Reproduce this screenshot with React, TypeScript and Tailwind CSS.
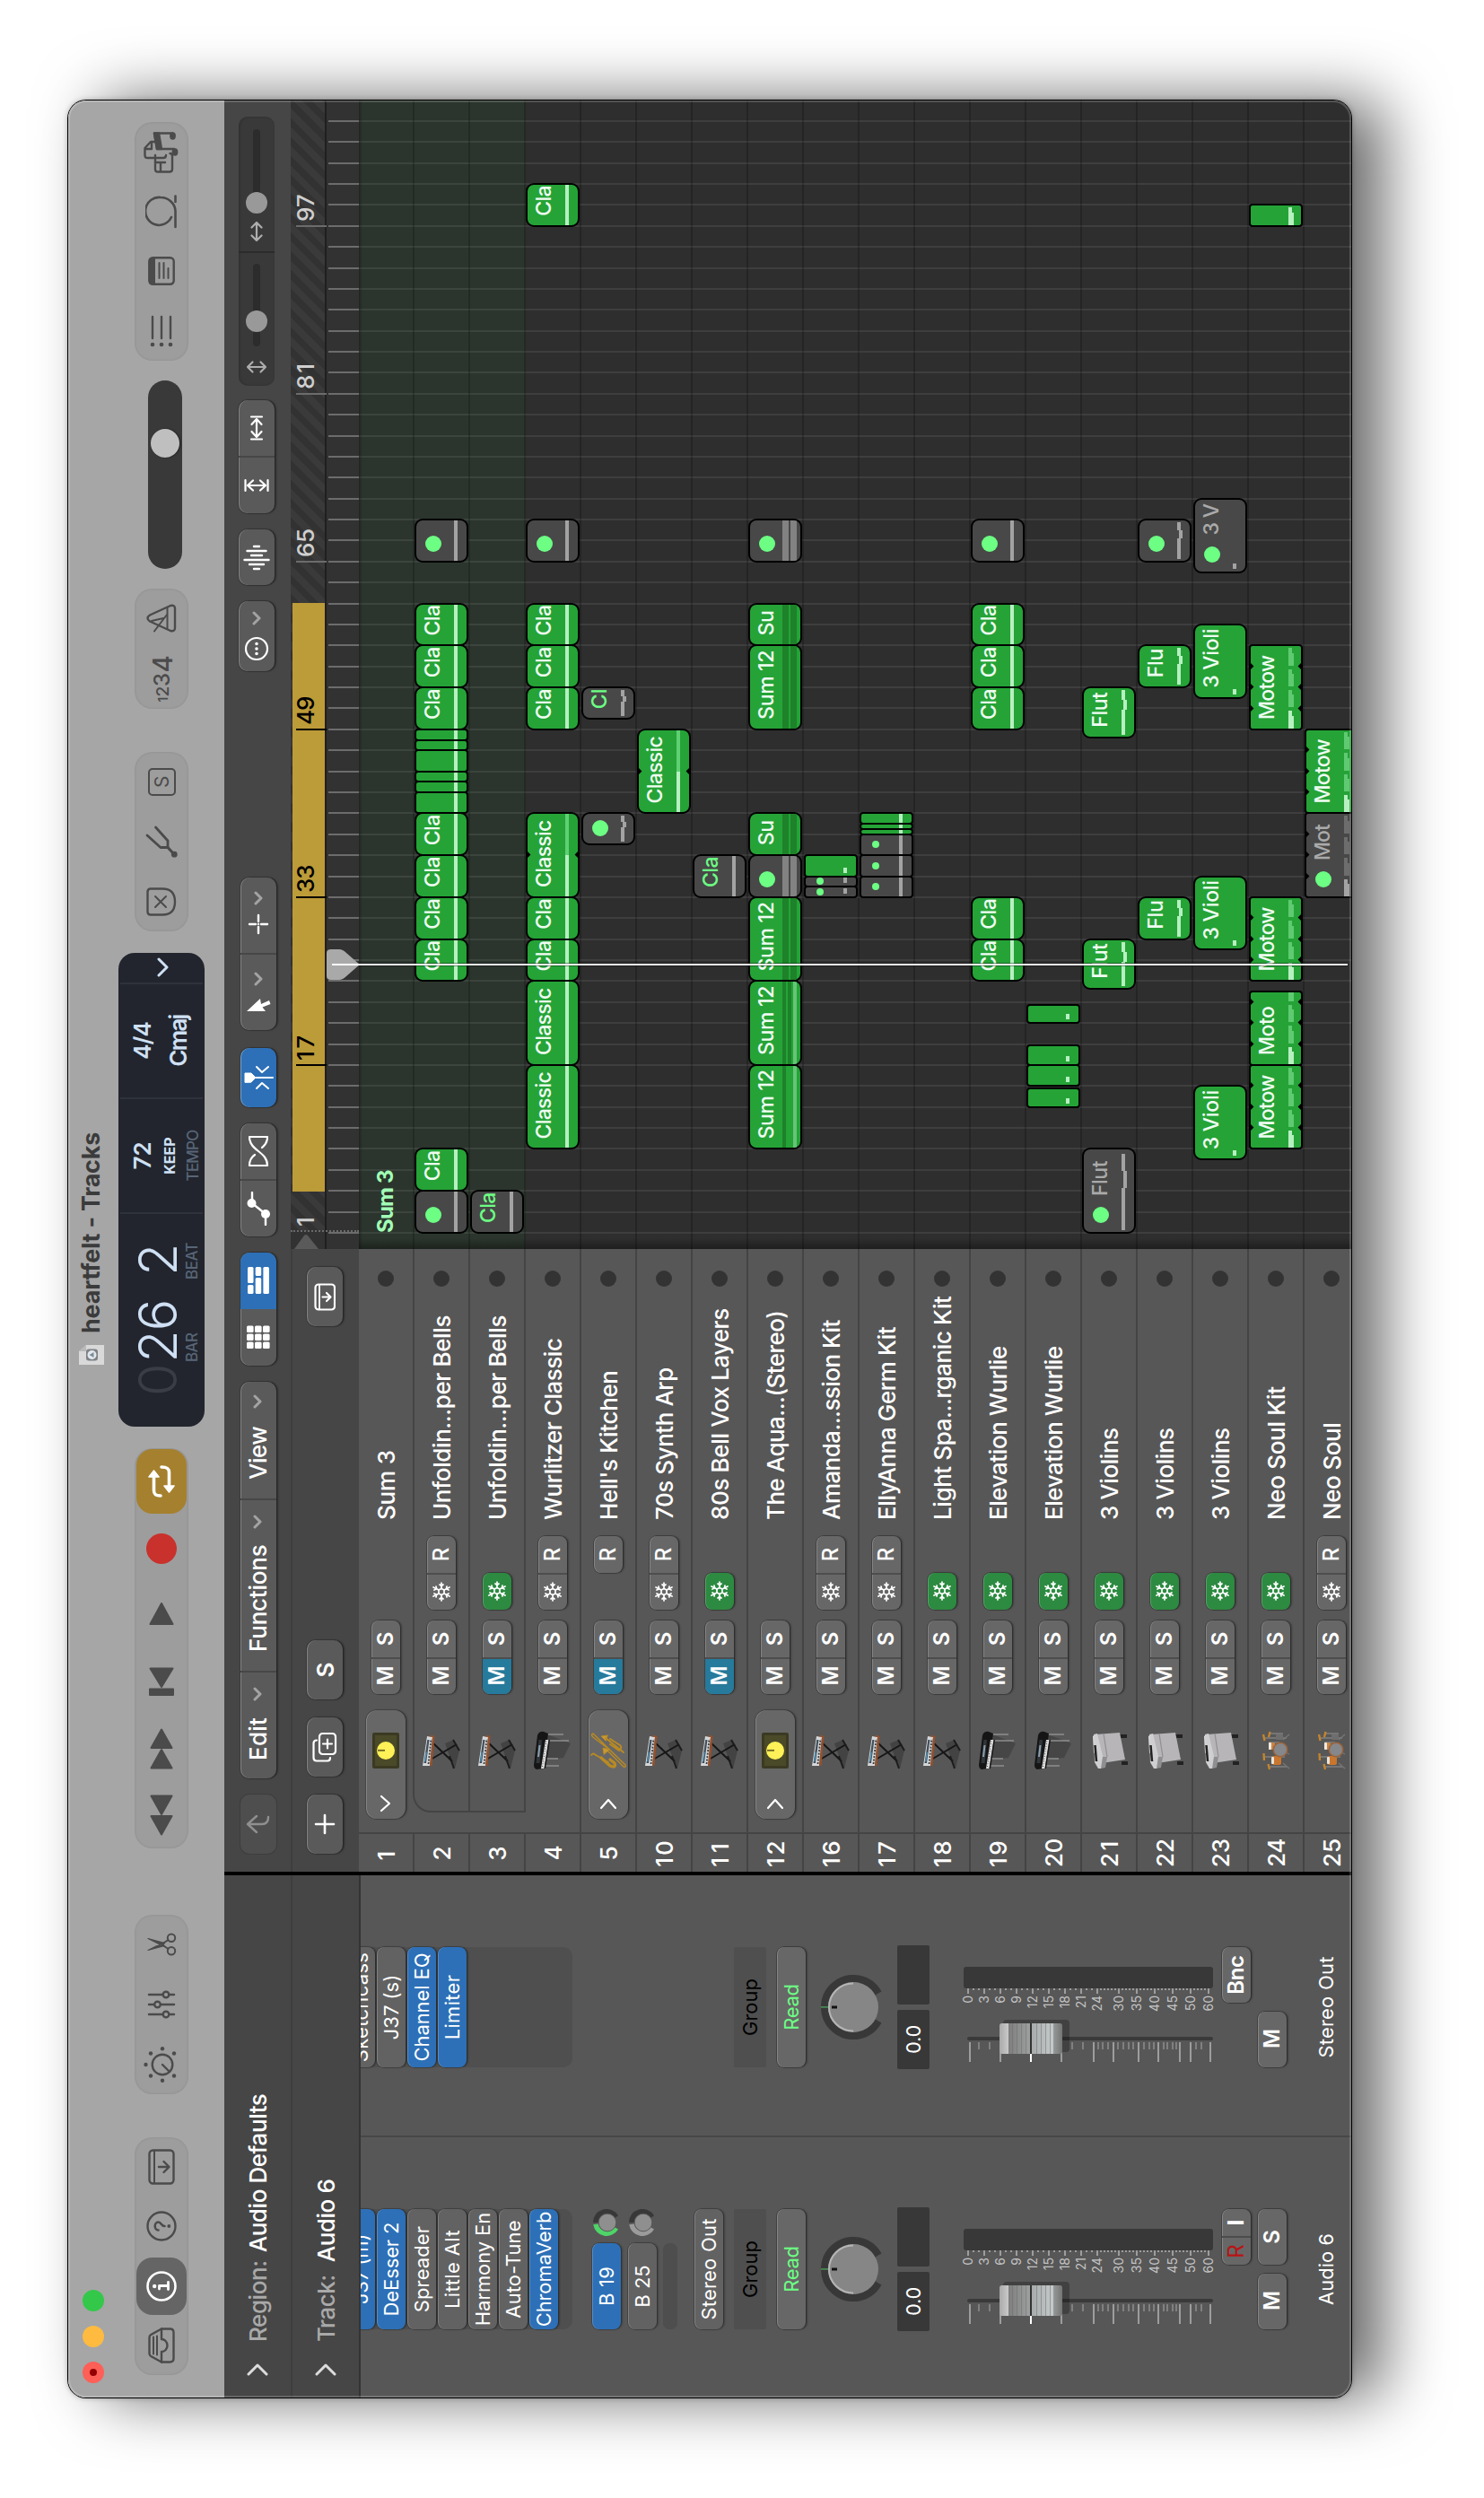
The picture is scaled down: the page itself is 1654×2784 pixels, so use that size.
import React, { useLayoutEffect, useRef, useState } from "react";
import { Snowflake } from "lucide-react";

/* ---------- helpers ---------- */

/** Text whose tracking is computed so that it fills the given width. */
function Fit({ w, className = "", children }: { w: number; className?: string; children: string }) {
  const ref = useRef<HTMLSpanElement>(null);
  const [spacing, setSpacing] = useState(0);
  useLayoutEffect(() => {
    const el = ref.current;
    if (!el) return;
    setSpacing((w - el.offsetWidth) / Math.max(1, children.length));
  }, [w, children]);
  return (
    <span ref={ref} style={{ letterSpacing: spacing }} className={"inline-block whitespace-pre " + className}>
      {children}
    </span>
  );
}

const raised =
  "bg-[#5a5a5a] rounded-[10px] shadow-[inset_0_1px_0_rgba(255,255,255,0.25),0_0_0_1px_rgba(0,0,0,0.18),0_2px_2px_rgba(0,0,0,0.35)]";
const blue =
  "bg-[#2d70b7] rounded-[10px] shadow-[inset_0_1px_0_rgba(255,255,255,0.35),0_0_0_1px_rgba(0,0,0,0.18),0_2px_2px_rgba(0,0,0,0.35)]";
const raisedSm =
  "bg-[#676767] rounded-[8px] shadow-[inset_0_1px_0_rgba(255,255,255,0.2),0_0_0_1px_rgba(0,0,0,0.25),0_2px_2px_rgba(0,0,0,0.3)]";

/* ---------- toolbar icons ---------- */

const Ico = ({ w, h, sw = 2.4, children }: { w: number; h: number; sw?: number; children: React.ReactNode }) => (
  <svg width={w} height={h} viewBox={`0 0 ${w} ${h}`} fill="none" stroke="currentColor" strokeWidth={sw} strokeLinecap="round" strokeLinejoin="round">
    {children}
  </svg>
);

const TrayIcon = () => (
  <Ico w={40} h={30}>
    <path d="M1.5 15 8 3.2Q9 1.5 11 1.5H29Q31 1.5 32 3.2L38.500 15V24.500Q38.500 28.500 34.500 28.500H5.500Q1.500 28.500 1.500 24.500Z" />
    <path d="M1.5 15H13a7 6.500 0 0 0 14 0H38.500" />
    <path d="M10.500 6H29.500M9.500 10H30.500" strokeWidth={2} />
  </Ico>
);
const InfoIcon = () => (
  <Ico w={34} h={34} sw={2.600}>
    <circle cx={17} cy={17} r={15.500} />
    <path d="M14 14.500H17.500V24M13.500 24.500H21.500" strokeWidth={2.800} />
    <circle cx={17} cy={9.200} r={2.200} fill="currentColor" stroke="none" />
  </Ico>
);
const HelpIcon = () => (
  <Ico w={34} h={34}>
    <circle cx={17} cy={17} r={15.500} />
    <path d="M12.500 13.500C12.500 8.500 21.500 8.500 21.500 13.500C21.500 17 17 16.500 17 20.500" strokeWidth={2.600} />
    <circle cx={17} cy={25.300} r={1.900} fill="currentColor" stroke="none" />
  </Ico>
);
const BoxArrowIcon = () => (
  <Ico w={40} h={30}>
    <rect x={1.500} y={1.500} width={37} height={27} rx={4} />
    <path d="M2 7H38" strokeWidth={2} />
    <path d="M20 12V23M14 17.500L20 23.500L26 17.500" />
  </Ico>
);
const BoxArrowSmall = () => (
  <Ico w={32} h={24} sw={2.200}>
    <rect x={1.500} y={1.500} width={28} height={21.500} rx={3.500} />
    <path d="M2 6H29" strokeWidth={1.800} />
    <path d="M15.500 9.500V18M11 14L15.500 18.500L20 14" />
  </Ico>
);
const KnobIcon = () => (
  <Ico w={42} h={42}>
    <circle cx={21} cy={22} r={11.300} />
    <path d="M21 22L13 30" />
    <g fill="currentColor" stroke="none">
      <circle cx={21} cy={3.500} r={2.200} />
      <circle cx={8.500} cy={9} r={2.200} />
      <circle cx={33.500} cy={9} r={2.200} />
      <circle cx={3.200} cy={22} r={2.200} />
      <circle cx={38.800} cy={22} r={2.200} />
      <circle cx={8.500} cy={35} r={2.200} />
      <circle cx={33.500} cy={35} r={2.200} />
    </g>
  </Ico>
);
const MixerIcon = () => (
  <Ico w={32} h={32}>
    <path d="M5 2V18M5 25V30M16 2V8M16 15V30M27 2V18M27 25V30" />
    <circle cx={5} cy={21} r={3.300} />
    <circle cx={16} cy={11.500} r={3.300} />
    <circle cx={27} cy={21} r={3.300} />
  </Ico>
);
const ScissorsIcon = () => (
  <Ico w={26} h={34} sw={2}>
    <circle cx={5.800} cy={28} r={4.200} />
    <circle cx={20.200} cy={28} r={4.200} />
    <path d="M8 24.500L13 17L18 24.500" />
    <path d="M6.500 2L14.500 18L11.500 20.500Z M19.500 2L11.500 18L14.500 20.500Z" fill="currentColor" strokeWidth={1.200} />
  </Ico>
);
const Rewind = ({ flip = false }: { flip?: boolean }) => (
  <svg width={48} height={28} viewBox="0 0 48 28" className={flip ? "-scale-x-100" : ""} fill="currentColor" stroke="currentColor" strokeWidth={2} strokeLinejoin="round">
    <path d="M2.500 14L23 2.500V25.500ZM25 14L45.500 2.500V25.500Z" />
  </svg>
);
const ToStart = () => (
  <svg width={34} height={30} viewBox="0 0 34 30" fill="currentColor" stroke="currentColor" strokeWidth={2} strokeLinejoin="round">
    <path d="M2 2H8.500V28H2Z M11 15L31.500 2.500V27.500Z" />
  </svg>
);
const Play = () => (
  <svg width={28} height={30} viewBox="0 0 28 30" className="relative left-[2px]" fill="currentColor" stroke="currentColor" strokeWidth={2} strokeLinejoin="round">
    <path d="M2 2.500L25 15L2 27.500Z" />
  </svg>
);
const CycleIcon = () => (
  <svg width={38} height={34} viewBox="0 0 38 34" fill="none" stroke="currentColor" strokeWidth={3.600} strokeLinecap="round">
    <path d="M3 16C3 10 5 8.500 9 8.500H24" />
    <path d="M35 17C35 24 33 25.500 29 25.500H14" />
    <path d="M24 3L31 8.500L24 14Z" fill="currentColor" strokeWidth={1.600} strokeLinejoin="round" />
    <path d="M14 20L7 25.500L14 31Z" fill="currentColor" strokeWidth={1.600} strokeLinejoin="round" />
  </svg>
);
const ReplaceIcon = () => (
  <Ico w={32} h={34}>
    <path d="M1.500 5Q1.500 1.500 5 1.500H27Q30.500 1.500 30.500 5V18Q30.500 32 16 32Q1.500 32 1.500 18Z" />
    <path d="M10 10L22 22M22 10L10 22" strokeWidth={2} />
  </Ico>
);
const ForkIcon = () => (
  <Ico w={38} h={38} sw={2.800}>
    <path d="M26 3L12.500 18V26H20L35 12.500" />
    <path d="M12.500 26L5 33" strokeWidth={3.200} />
    <circle cx={4.800} cy={33.300} r={3.400} fill="currentColor" stroke="none" />
  </Ico>
);
const MetronomeIcon = () => (
  <Ico w={34} h={34}>
    <path d="M13.500 4Q17 -1 20.500 4L31 27Q32 32 28 32H6Q2 32 3 27Z" />
    <path d="M5 23.500H29M21 23L2.500 9M14 6L17 19" strokeWidth={2} />
  </Ico>
);
const ListIcon = () => (
  <Ico w={36} h={26}>
    <path d="M10 3H34M10 13H34M10 23H34" />
    <g fill="currentColor" stroke="none">
      <circle cx={3} cy={3} r={2.300} />
      <circle cx={3} cy={13} r={2.300} />
      <circle cx={3} cy={23} r={2.300} />
    </g>
  </Ico>
);
const NotepadIcon = () => (
  <Ico w={32} h={30}>
    <rect x={1.300} y={1.300} width={29.400} height={27.400} rx={4} />
    <path d="M2 2H30V7.500H2Z" fill="currentColor" strokeWidth={1} />
    <path d="M8 12.500H25M8 17.500H25M8 22.500H19" strokeWidth={2} />
  </Ico>
);
const LoopIcon = () => (
  <Ico w={38} h={36} sw={2.600}>
    <path d="M2 33.500H20C28 33 35 26 35 17A15.500 15.200 0 1 0 13 29" />
    <path d="M30 33.500H36.500" />
  </Ico>
);
const MediaIcon = () => (
  <Ico w={48} h={40}>
    <path d="M20 13H4.500Q1.500 13 1.500 16V29Q1.500 32 4.500 32H19Q22 32 22 29.500M2 19H12M12 13V24" />
    <path d="M20 25Q17 25 17 22V4.500Q17 1.500 20 1.500H28L35 8V12M27 2V9H34" />
    <path d="M27 34V15L44.500 12V32" strokeWidth={2.600} />
    <path d="M27 15L44.500 12V17L27 20Z" fill="currentColor" />
    <ellipse cx={23.500} cy={35} rx={4.200} ry={3.400} fill="currentColor" stroke="none" />
    <ellipse cx={41.500} cy={32.500} rx={4.200} ry={3.400} fill="currentColor" stroke="none" />
  </Ico>
);

/* ---------- title bar ---------- */

const Pill = ({ className, children }: { className: string; children: React.ReactNode }) => (
  <div className={"flex h-[60px] shrink-0 rounded-[20px] bg-[#9d9d9d] text-[#4b4b4b] shadow-[inset_0_0_3px_rgba(0,0,0,0.12)] *:flex *:h-full *:flex-1 *:items-center *:justify-center " + className}>
    {children}
  </div>
);

function Lcd() {
  return (
    <div className="ml-6 flex h-24 w-[528px] shrink-0 rounded-[18px] bg-[#22252e] py-[2px] text-[#cfe0f4]">
      <div className="flex w-[239px] border-r-2 border-[#2e323b] pl-[34px]">
        <div className="flex h-[84px] text-[59px] leading-[84px] font-light">
          <Fit w={37} className="text-[#3a3d45]">0</Fit>
          <Fit w={70}>26</Fit>
        </div>
        <div className="ml-[27px] h-[84px] text-[59px] leading-[84px] font-light">
          <Fit w={34}>2</Fit>
        </div>
      </div>
      <div className="flex w-[128px] flex-col items-center border-r-2 border-[#2e323b] pt-[12px]">
        <Fit w={31} className="text-[26px] leading-[26px] font-semibold">72</Fit>
        <Fit w={41} className="mt-[7px] text-[16px] leading-[20px] font-bold">KEEP</Fit>
        <Fit w={57} className="mt-[6px] text-[17px] leading-[20px] font-medium text-[#586577]">TEMPO</Fit>
      </div>
      <div className="flex w-[128px] flex-col items-center border-r-2 border-[#2e323b] pt-[12px] text-[26px] leading-[26px] font-semibold">
        <Fit w={41}>4/4</Fit>
        <Fit w={57} className="mt-[14px]">Cmaj</Fit>
      </div>
      <div className="flex w-[33px] items-center justify-center pt-1">
        <Ico w={22} h={14} sw={3}>
          <path d="M2 2L11 11L20 2" />
        </Ico>
      </div>
    </div>
  );
}

function TitleBar() {
  return (
    <div className="h-[174px] shrink-0 bg-[#a6a6a6]">
      <div className="relative flex h-14 items-center pl-4">
        <div className="flex gap-4">
          <span className="flex size-6 items-center justify-center rounded-full bg-[#fe5f57]">
            <span className="size-2 rounded-full bg-[#950003]" />
          </span>
          <span className="size-6 rounded-full bg-[#febb40]" />
          <span className="size-6 rounded-full bg-[#34c84a]" />
        </div>
        <div className="-mt-1 ml-[1030px] flex items-center">
          <svg width={24} height={30} viewBox="0 0 24 30">
            <path d="M1 1H16L23 9V29H1Z" fill="#d9d9d9" />
            <path d="M16 1V9H23Z" fill="#b9b9b9" />
            <rect x={5.500} y={9} width={13} height={13} rx={3} fill="#7d8288" />
            <circle cx={12} cy={15.500} r={5} fill="#e4e8ec" />
            <path d="M9 17.500L12 12.500L15 17.500Z" fill="#7a8c9c" />
          </svg>
          <Fit w={224} className="ml-[12px] text-[27px] font-bold text-[#3b3b3b]">heartfelt - Tracks</Fit>
        </div>
      </div>
      <div className="flex h-24 items-center pl-[25px]">
        <Pill className="w-[265px]">
          <span><TrayIcon /></span>
          <span>
            <span className="flex h-14 w-16 items-center justify-center rounded-[18px] bg-[#656565] text-white"><InfoIcon /></span>
          </span>
          <span><HelpIcon /></span>
          <span><BoxArrowIcon /></span>
        </Pill>
        <Pill className="ml-12 w-[200px]">
          <span><KnobIcon /></span>
          <span><MixerIcon /></span>
          <span><ScissorsIcon /></span>
        </Pill>
        <Pill className="ml-[74px] w-[446px]">
          <span><Rewind /></span>
          <span><Rewind flip /></span>
          <span><ToStart /></span>
          <span><Play /></span>
          <span><span className="size-[34px] rounded-full bg-[#c9312d]" /></span>
          <span>
            <span className="flex h-14 w-[72px] items-center justify-center rounded-[18px] bg-[#a5802e] text-white"><CycleIcon /></span>
          </span>
        </Pill>
        <div className="relative flex">
          <Lcd />
          <Fit w={32} className="absolute top-[70px] left-[96px] text-[17px] font-medium text-[#586577]">BAR</Fit>
          <Fit w={41} className="absolute top-[70px] left-[188px] text-[17px] font-medium text-[#586577]">BEAT</Fit>
        </div>
        <Pill className="ml-6 w-[200px]">
          <span><ReplaceIcon /></span>
          <span><ForkIcon /></span>
          <span>
            <span className="flex size-[31px] items-center justify-center rounded-[5px] border-[2.5px] border-[#4b4b4b] text-[21px] leading-none">S</span>
          </span>
        </Pill>
        <Pill className="ml-12 w-[134px]">
          <span className="pt-[2px] leading-none font-medium">
            <span className="text-[15px]">1</span>
            <span className="text-[19px]">2</span>
            <span className="text-[24px]">3</span>
            <span className="text-[30px]">4</span>
          </span>
          <span><MetronomeIcon /></span>
        </Pill>
        <div className="mt-2 ml-[22px] flex h-[38px] w-[210px] items-center rounded-full bg-[#393939] pl-[124px]">
          <span className="size-8 rounded-full bg-[#bfbfbf] shadow-[0_1px_2px_rgba(0,0,0,0.5)]" />
        </div>
        <Pill className="ml-[22px] w-[266px]">
          <span><ListIcon /></span>
          <span><NotepadIcon /></span>
          <span><LoopIcon /></span>
          <span><MediaIcon /></span>
        </Pill>
      </div>
    </div>
  );
}

/* ---------- inspector ---------- */

const TICK_LABELS: [string, number][] = [
  ["0", 5], ["3", 23], ["6", 41], ["9", 59], ["12", 77], ["15", 95], ["18", 113], ["21", 131],
  ["24", 149], ["30", 173], ["35", 193], ["40", 213], ["45", 233], ["50", 253], ["60", 273],
];
const LONG_TICKS = [7, 41, 109, 145, 167, 195, 217, 241, 253, 275];
const SHORT_TICKS = [17, 29, 121, 133, 150, 155, 161, 172, 178, 184, 189, 201, 207, 212, 223, 227, 233, 237, 259, 265];

function Fader() {
  const minor: number[] = [];
  for (let i = 0; i < 8; i++) for (const s of [6, 12]) minor.push(5 + i * 18 + s);
  for (let y = 153; y < 273; y += 4) minor.push(y);
  return (
    <svg width={134} height={278} viewBox="0 0 134 278" className="block overflow-visible">
      <defs>
        <linearGradient id="cap" x1="0" y1="0" x2="0" y2="1">
          <stop offset="0" stopColor="#a9a9a9" />
          <stop offset="0.14" stopColor="#c9c9c9" />
          <stop offset="0.145" stopColor="#7e7e7e" />
          <stop offset="0.5" stopColor="#9fa1a1" />
          <stop offset="0.52" stopColor="#a8acac" />
          <stop offset="0.85" stopColor="#c4c9ca" />
          <stop offset="0.855" stopColor="#979a9a" />
          <stop offset="1" stopColor="#747474" />
        </linearGradient>
      </defs>
      <rect x={88} y={0} width={24} height={278} rx={3} fill="#383838" />
      <g fill="#9d9d9d">
        {TICK_LABELS.map(([t, y]) => (
          <g key={t}>
            <rect x={82} y={y - 1} width={6} height={2} />
            <text x={80} y={y + 5} textAnchor="end" fontSize={14} fill="#c4c4c4">{t}</text>
          </g>
        ))}
        {minor.map((y) => <rect key={y} x={86} y={y - 1} width={2} height={2} />)}
        {LONG_TICKS.map((y) => <rect key={y} x={6} y={y - 1} width={22} height={2} />)}
        {SHORT_TICKS.map((y) => <rect key={y} x={20} y={y - 1} width={8} height={2} fill="#808080" />)}
      </g>
      <rect x={6} y={74} width={22} height={2} fill="#fff" />
      <rect x={30} y={4} width={4} height={274} rx={2} fill="#3a3a3a" />
      <rect x={17} y={44} width={36} height={74} rx={4} fill="#000" opacity={0.25} />
      <rect x={15} y={40} width={34} height={70} rx={2.500} fill="url(#cap)" />
      {[54, 59, 64, 69, 81, 86, 91, 96].map((y) => <rect key={y} x={15} y={y} width={34} height={0.800} fill="#6b6b6b" opacity={0.6} />)}
      <rect x={15} y={74} width={34} height={2} fill="#333" />
    </svg>
  );
}

const PanKnob = () => (
  <svg width={72} height={72} viewBox="0 0 72 72" className="mx-auto mt-[17px] block">
    <path d="M20.500 64A32 32 0 1 1 51.500 64" fill="none" stroke="#383838" strokeWidth={8} />
    <circle cx={36} cy={36} r={28} fill="#868686" />
    <path d="M9.500 36A26.500 27 0 0 1 62.500 36" fill="none" stroke="#b5b5b5" strokeWidth={2} />
    <rect x={35.500} y={0} width={1.200} height={8} fill="#4fae62" />
    <rect x={34.500} y={12} width={3} height={6} fill="#111" />
  </svg>
);

const SendKnob = ({ arc }: { arc: string }) => (
  <svg width={32} height={32} viewBox="0 0 32 32" className="ml-2">
    <path d="M16 3A13 13 0 0 1 22.500 27.300" fill="none" stroke="#383838" strokeWidth={6} />
    <path d="M14 3.200A13 13 0 0 0 9.500 27.300" fill="none" stroke={arc} strokeWidth={6} />
    <circle cx={16} cy={17} r={10.500} fill="#8f8f8f" stroke="#575757" strokeWidth={1} />
  </svg>
);

type Slot = { t: string; w: number; on?: boolean };

const SlotButton = ({ t, w, on, className = "" }: Slot & { className?: string }) => (
  <div
    className={
      "flex h-8 shrink-0 items-center justify-center rounded-[8px] text-[22px] text-white shadow-[inset_0_1px_0_rgba(255,255,255,0.2),0_0_0_1px_rgba(0,0,0,0.22),0_2px_2px_rgba(0,0,0,0.25)] " +
      (on ? "bg-[#2d70b7] " : "bg-[#626262] ") + className
    }
  >
    <Fit w={w}>{t}</Fit>
  </div>
);

function Strip({ name, nameWidth, slots, audio }: { name: string; nameWidth: number; slots: Slot[]; audio: boolean }) {
  return (
    <div className="flex h-full w-[290px] shrink-0 flex-col pr-[80px] pl-[76px]">
      <div className="-mt-4 flex h-[252px] shrink-0 flex-col gap-[2px] rounded-[10px] bg-[#4f4f4f]">
        {slots.map((s) => <SlotButton key={s.t} {...s} />)}
      </div>
      <div className="mt-[22px] h-[114px] shrink-0">
        {audio && (
          <div className="flex flex-col">
            <div className="flex h-8"><SlotButton t="B 19" w={44} on className="w-24" /><SendKnob arc="#4fd468" /></div>
            <div className="mt-2 flex h-8"><SlotButton t="B 25" w={47} className="w-24" /><SendKnob arc="#9b9b9b" /></div>
            <div className="mt-[7px] h-4 w-24 rounded-[7px] bg-[#4e4e4e]" />
          </div>
        )}
      </div>
      <div className="h-8 shrink-0">{audio && <SlotButton t="Stereo Out" w={113} />}</div>
      <div className="mt-3 flex h-9 shrink-0 items-center justify-center rounded-[2px] bg-[#4f4f4f] text-[22px] text-black"><Fit w={64}>Group</Fit></div>
      <div className={"mt-3 flex h-8 shrink-0 items-center justify-center text-[22px] text-[#6cff84] " + raisedSm}><Fit w={52}>Read</Fit></div>
      <PanKnob />
      <div className="-mx-[2px] mt-[13px] flex h-9 shrink-0 gap-[6px]">
        <div className="flex flex-1 items-center justify-center rounded-[2px] bg-[#383838] text-[22px] text-white"><Fit w={32}>0.0</Fit></div>
        <div className="flex-1 rounded-[2px] bg-[#383838]" />
      </div>
      <div className="mt-[38px] h-[278px] shrink-0"><Fader /></div>
      <div className="mt-[10px] flex h-8 shrink-0 justify-end text-[24px]">
        {audio ? (
          <div className={"flex w-[62px] " + raisedSm}>
            <span className="flex flex-1 items-center justify-center border-r-2 border-[#4c4c4c] text-[#b81414]">R</span>
            <span className="flex flex-1 items-center justify-center font-bold text-white">I</span>
          </div>
        ) : (
          <div className={"flex w-[62px] items-center justify-center font-semibold text-white " + raisedSm}><Fit w={43}>Bnc</Fit></div>
        )}
      </div>
      <div className="mt-2 flex h-8 shrink-0 justify-between text-[24px] font-semibold text-white">
        <div className={"flex w-[62px] items-center justify-center " + raisedSm}><Fit w={20}>M</Fit></div>
        {audio && <div className={"flex w-[62px] items-center justify-center " + raisedSm}><Fit w={16}>S</Fit></div>}
      </div>
      <div className="mt-[30px] flex h-7 items-center justify-center text-[22px] text-white"><Fit w={nameWidth}>{name}</Fit></div>
    </div>
  );
}

function Inspector() {
  return (
    <div className="flex w-[582px] shrink-0 flex-col bg-[#464646]">
      <div className="flex h-[76px] shrink-0 items-center border-b-2 border-[#3e3e3e] pl-[24px] text-[26px] font-medium">
        <Ico w={14} h={24} sw={3}><path d="M2 2L12 12L2 22" stroke="#dcdcdc" /></Ico>
        <Fit w={91} className="ml-[24px] text-[#a9a9a9]">Region:</Fit>
        <Fit w={177} className="ml-[9px] text-white">Audio Defaults</Fit>
      </div>
      <div className="flex h-[76px] shrink-0 items-center border-b-2 border-[#343434] pl-[24px] text-[26px] font-medium">
        <Ico w={14} h={24} sw={3}><path d="M2 2L12 12L2 22" stroke="#dcdcdc" /></Ico>
        <Fit w={75} className="ml-[24px] text-[#a9a9a9]">Track:</Fit>
        <Fit w={93} className="ml-[14px] text-white">Audio 6</Fit>
      </div>
      <div className="flex min-h-0 flex-1 overflow-hidden bg-[#575757]">
        <Strip
          name="Audio 6"
          nameWidth={80}
          audio
          slots={[
            { t: "J37 (m)", w: 78, on: true },
            { t: "DeEsser 2", w: 105, on: true },
            { t: "Spreader", w: 96 },
            { t: "Little Alt", w: 88 },
            { t: "Harmony En", w: 126 },
            { t: "Auto-Tune", w: 109 },
            { t: "ChromaVerb", w: 129, on: true },
          ]}
        />
        <div className="w-[2px] shrink-0 bg-[#474747]" />
        <Strip
          name="Stereo Out"
          nameWidth={113}
          audio={false}
          slots={[
            { t: "Sketchcass", w: 122 },
            { t: "J37 (s)", w: 72 },
            { t: "Channel EQ", w: 121, on: true },
            { t: "Limiter", w: 72, on: true },
          ]}
        />
      </div>
    </div>
  );
}

/* ---------- track toolbar ---------- */

const Chev = () => (
  <Ico w={16} h={10} sw={3}><path d="M2 2L8 8L14 2" stroke="#a3a3a3" /></Ico>
);
const cell = "flex h-full items-center justify-center";
const div = " border-r-2 border-[#474747]";

function Toolbar() {
  return (
    <div className="flex h-[76px] shrink-0 border-b-2 border-[#3e3e3e] pt-[18px] pl-5 text-[26px] font-medium text-white *:h-10 *:shrink-0">
      <div className="flex w-[66px] items-center justify-center rounded-[10px] bg-[#4e4e4e] text-[#8f8f8f] shadow-[0_0_0_1px_rgba(0,0,0,0.12)]">
        <Ico w={22} h={28}><path d="M2 12L11 2L20 12M11 2V18Q11 25 19 25" /></Ico>
      </div>
      <div className={"ml-[18px] flex *:pb-[2px] " + raised}>
        <div className={"flex h-full w-[120px] items-center justify-between pr-[16px] pl-[20px]" + div}><Fit w={48}>Edit</Fit><Chev /></div>
        <div className={"flex h-full w-[192px] items-center justify-between pr-[16px] pl-[21px]" + div}><Fit w={119}>Functions</Fit><Chev /></div>
        <div className="flex h-full w-[130px] items-center justify-between pr-[14px] pl-[21px]"><Fit w={59}>View</Fit><Chev /></div>
      </div>
      <div className={"ml-[18px] flex overflow-hidden " + raised}>
        <div className={cell + " w-[63px]"}>
          <svg width={26} height={26} viewBox="0 0 26 26" fill="#fff">
            {[0, 9, 18].map((y) => [0, 9, 18].map((x) => <rect key={`${x}-${y}`} x={x} y={y} width={7.600} height={7.600} rx={1.500} />))}
          </svg>
        </div>
        <div className={cell + " w-[63px] bg-[#2d70b7]"}>
          <svg width={30} height={24} viewBox="0 0 30 24" fill="#fff">
            <rect x={0} y={0} width={10} height={6.500} rx={1.500} />
            <rect x={12} y={0} width={18} height={6.500} rx={1.500} />
            <rect x={0} y={8.700} width={18} height={6.500} rx={1.500} />
            <rect x={20} y={8.700} width={10} height={6.500} rx={1.500} />
            <rect x={0} y={17.400} width={30} height={6.500} rx={1.500} />
          </svg>
        </div>
      </div>
      <div className={"ml-[18px] flex " + raised}>
        <div className={cell + " w-[64px]" + div}>
          <Ico w={38} h={28}>
            <path d="M1 22H13L25 7H37" />
            <circle cx={13} cy={22} r={5} fill="#fff" stroke="none" />
            <circle cx={25} cy={6.500} r={5} fill="#fff" stroke="none" />
          </Ico>
        </div>
        <div className={cell + " w-[62px]"}>
          <Ico w={36} h={24} sw={2.200}>
            <path d="M2 2V22C10 22 14 17 18 12C22 7 26 2 34 2V22C26 22 24 18 22 16M2 2C9 2 12 5 14 8" />
          </Ico>
        </div>
      </div>
      <div className={cell + " ml-[18px] w-[66px] " + blue}>
        <Ico w={28} h={34} sw={2}>
          <path d="M9 2H19V9L14 14L9 9Z" fill="#fff" strokeWidth={1} />
          <path d="M14 12V33M2 15L8 21L2 28M26 15L20 21L26 28" />
        </Ico>
      </div>
      <div className={"ml-[20px] flex " + raised}>
        <div className={cell + " w-[86px] gap-[12px]" + div}>
          <svg width={18} height={28} viewBox="0 0 18 28"><path d="M2 1L16 16L10 17L14 26L10 27.500L6.500 18.500L2 22Z" fill="#fff" /></svg>
          <Chev />
        </div>
        <div className={cell + " w-[84px] gap-[9px] pl-[4px]"}>
          <Ico w={24} h={24}><path d="M12 2V9M12 15V22M2 12H9M15 12H22M12 12H12" /></Ico>
          <Chev />
        </div>
      </div>
      <div className="flex-1" />
      <div className={"-mt-[2px] flex w-[78px] items-center justify-center gap-[12px] " + raised}>
        <Ico w={28} h={28} sw={2.200}>
          <circle cx={14} cy={14} r={12} />
          <path d="M8.500 14H8.500M14 14H14M19.500 14H19.500" strokeWidth={3.600} />
        </Ico>
        <Chev />
      </div>
      <div className={cell + " -mt-[2px] ml-[18px] w-[62px] " + raised}>
        <Ico w={30} h={30} sw={2.400}><path d="M2 12V18M7 7V23M12 1.500V28.500M17 9V21M22 4.500V25.500M27 12V18" /></Ico>
      </div>
      <div className={"-mt-[2px] ml-[18px] flex " + raised}>
        <div className={cell + " w-[64px]" + div}>
          <Ico w={16} h={28} sw={2.200}><path d="M2 1.500H14M2 26.500H14M8 5V23M2.500 10L8 4L13.500 10M2.500 18L8 24L13.500 18" /></Ico>
        </div>
        <div className={cell + " w-[62px]"}>
          <Ico w={28} h={16} sw={2.200}><path d="M1.500 2V14M26.500 2V14M5 8H23M10 2.500L4 8L10 13.500M18 2.500L24 8L18 13.500" /></Ico>
        </div>
      </div>
      <div className="-mt-[2px] mr-[18px] ml-[16px] flex w-[300px] rounded-[10px] bg-[#393939] shadow-[inset_0_1px_3px_rgba(0,0,0,0.2)]">
        <div className="flex w-[150px] items-center border-r-2 border-[#2b2b2b] pl-[13px] text-[#adadad]">
          <Ico w={16} h={24} sw={2.200}><path d="M8 2V22M2.500 7.500L8 2L13.500 7.500M2.500 16.500L8 22L13.500 16.500" /></Ico>
          <div className="ml-[15px] flex h-2 w-[92px] items-center rounded-full bg-[#2c2c2c] pl-[16px]">
            <span className="size-6 shrink-0 rounded-full bg-[#999]" />
          </div>
        </div>
        <div className="flex flex-1 items-center pl-[10px] text-[#adadad]">
          <Ico w={24} h={16} sw={2.200}><path d="M2 8H22M7.500 2.500L2 8L7.500 13.500M16.500 2.500L22 8L16.500 13.500" /></Ico>
          <div className="ml-[8px] flex h-2 w-[94px] items-center rounded-full bg-[#2c2c2c]">
            <span className="size-6 shrink-0 rounded-full bg-[#999]" />
          </div>
        </div>
      </div>
    </div>
  );
}

/* ---------- instruments ---------- */

const Synth = () => (
  <svg width={44} height={44} viewBox="0 0 44 44">
    <path d="M16 31L2 37L22 42L34 36L30 26Z" fill="#434343" />
    <path d="M12 10L29 39M30 13L10 34" stroke="#161616" strokeWidth={2} />
    <path d="M34 35L22 42M16 31L2 36" stroke="#1c1c1c" strokeWidth={2} />
    <path d="M5 1L38 6L37 12L5 9Z" fill="#d5d8da" />
    <path d="M8 2.500L34 6.300V8.500L8 5Z" fill="#42505c" />
    <path d="M10 3.200L20 4.700V5.800L10 4.300Z" fill="#4f9cc4" />
    <path d="M7 7.500L35 10.500" stroke="#3b3b3b" strokeWidth={1.800} strokeDasharray="2 1.500" />
    <path d="M5 9L37 12L38 8L39 11.500L38 14.500L5 11.500Z" fill="#96502c" />
  </svg>
);
const Wurli = () => (
  <svg width={44} height={44} viewBox="0 0 44 44">
    <path d="M12 16H40L30 42L14 34Z" fill="#3f3f3f" opacity={0.7} />
    <path d="M5 12V29M13 14V28M33 17V40M40 16V34" stroke="#8f8f8f" strokeWidth={1.400} />
    <path d="M1 4Q2 1 6 1L39 5Q44 7 43 12L41 17L2 11Z" fill="#151515" />
    <path d="M8 3.500L34 6.500V10L8 7.500Z" fill="#30363a" />
    <path d="M15 5L28 6.500V8.500L15 7Z" fill="#8aa0b0" />
    <path d="M2 9L34 14V17.500L2 12.500Z" fill="#dedede" />
    <path d="M4 10.500L33 15" stroke="#555" strokeWidth={1} strokeDasharray="1 1.800" />
    <path d="M2 12.500L34 17.500V19L2 14Z" fill="#1a1a1a" />
  </svg>
);
const Brass = () => (
  <svg width={44} height={44} viewBox="0 0 44 44" fill="none" stroke="#b98a23" strokeLinecap="round" strokeLinejoin="round">
    <path d="M24 22L37 5Q40 2 41 5L6 41Q3 42 4 39L24 19" strokeWidth={1.500} />
    <path d="M18 17L25 16L23 23Z" fill="#c99a34" strokeWidth={1} />
    <path d="M33 19L38 14L39 21Z" fill="#c99a34" strokeWidth={1} />
    <path d="M36 19L20 39M35 24L28 35Q25 38 22 34L29 24" strokeWidth={2} />
    <path d="M17 3Q20 5 17 8L9 22" strokeWidth={1.800} />
    <path d="M14 14L5 24Q2 31 8 29L12 24" strokeWidth={3.400} />
  </svg>
);
const Piano = () => (
  <svg width={44} height={44} viewBox="0 0 44 44" className="relative top-[2px]">
    <path d="M8 34V41M38 32V40" stroke="#222" strokeWidth={4} />
    <path d="M8 12L40 5L42 32L12 38Z" fill="#b7b5b8" />
    <path d="M8 12L40 5L38 2L20 3Z" fill="#e2e1e3" />
    <path d="M2 8L9 4L40 3L41 7L16 13L2 12Z" fill="#cfced1" />
    <path d="M10 6L28 4.500" stroke="#222" strokeWidth={2.500} />
    <path d="M2 11L15 13V18L3 16Z" fill="#8f8e91" />
    <path d="M15 18L41 14" stroke="#8f8e91" strokeWidth={1.200} />
  </svg>
);
const Drums = () => (
  <svg width={44} height={32} viewBox="0 0 44 32">
    <path d="M4 9V28M15 4V26M36 4V28M41 8V24M31 8V20" stroke="#9b9b9b" strokeWidth={0.900} />
    <path d="M2 31L8 24M40 31L34 24M18 31L20 27" stroke="#777" strokeWidth={1.300} />
    <path d="M1 9L7 7.500M11 3L19 2.500M33 3.500L40 2M37 8L43 9.500" stroke="#c4842c" strokeWidth={2.400} />
    <rect x={6} y={12} width={10} height={10} rx={2} fill="#c9762f" />
    <rect x={7} y={11} width={8} height={3} rx={1} fill="#e9e3da" />
    <rect x={23} y={8} width={8} height={7} rx={1.500} fill="#c98646" />
    <rect x={23} y={8} width={8} height={3} rx={1} fill="#efeae3" />
    <circle cx={23} cy={21} r={8.500} fill="#9c6238" />
    <circle cx={23} cy={21} r={7} fill="#85878a" />
    <rect x={34} y={16} width={6} height={8} rx={1} fill="#6e6e6e" />
  </svg>
);
const StackIcon = () => (
  <svg width={40} height={30} viewBox="0 0 40 30">
    <rect width={40} height={30} rx={2} fill="#3b3a22" />
    <rect x={3} y={3} width={34} height={24} fill="#4a4a29" />
    <circle cx={20} cy={15} r={10} fill="#fff157" />
    <rect x={19.300} y={6} width={1.800} height={8} fill="#6b6526" />
  </svg>
);

/* ---------- tracks ---------- */

type Inst = "stack" | "synth" | "wurli" | "brass" | "piano" | "drums";
type Track = { n: string; name: string; w: number; inst: Inst; fold?: "open" | "closed"; mute?: boolean; fz?: "off" | "on"; rec?: boolean; child?: boolean };

const TRACKS: Track[] = [
  { n: "1", name: "Sum 3", w: 78, inst: "stack", fold: "open" },
  { n: "2", name: "Unfoldin...per Bells", w: 228, inst: "synth", fz: "off", rec: true, child: true },
  { n: "3", name: "Unfoldin...per Bells", w: 228, inst: "synth", mute: true, fz: "on", child: true },
  { n: "4", name: "Wurlitzer Classic", w: 202, inst: "wurli", fz: "off", rec: true },
  { n: "5", name: "Hell's Kitchen", w: 167, inst: "brass", fold: "closed", mute: true, rec: true },
  { n: "10", name: "70s Synth Arp", w: 170, inst: "synth", fz: "off", rec: true },
  { n: "11", name: "80s Bell Vox Layers", w: 236, inst: "synth", mute: true, fz: "on" },
  { n: "12", name: "The Aqua...(Stereo)", w: 233, inst: "stack", fold: "closed" },
  { n: "16", name: "Amanda...ssion Kit", w: 223, inst: "synth", fz: "off", rec: true },
  { n: "17", name: "EllyAnna Germ Kit", w: 215, inst: "synth", fz: "off", rec: true },
  { n: "18", name: "Light Spa...rganic Kit", w: 250, inst: "synth", fz: "on" },
  { n: "19", name: "Elevation Wurlie", w: 194, inst: "wurli", fz: "on" },
  { n: "20", name: "Elevation Wurlie", w: 194, inst: "wurli", fz: "on" },
  { n: "21", name: "3 Violins", w: 103, inst: "piano", fz: "on" },
  { n: "22", name: "3 Violins", w: 103, inst: "piano", fz: "on" },
  { n: "23", name: "3 Violins", w: 103, inst: "piano", fz: "on" },
  { n: "24", name: "Neo Soul Kit", w: 149, inst: "drums", fz: "on" },
  { n: "25", name: "Neo Soul", w: 108, inst: "drums", fz: "off", rec: true },
];

const INST: Record<Inst, () => React.JSX.Element> = { stack: StackIcon, synth: Synth, wurli: Wurli, brass: Brass, piano: Piano, drums: Drums };

function TrackHeader({ t, i }: { t: Track; i: number }) {
  const Icon = INST[t.inst];
  const shadow = "shadow-[inset_0_1px_0_rgba(255,255,255,0.2),0_0_0_1px_rgba(0,0,0,0.25),0_2px_2px_rgba(0,0,0,0.3)]";
  return (
    <div className="flex h-[62px] shrink-0">
      <div className="flex w-[44px] items-center justify-center border-r-2 border-b-2 border-[#444] text-[26px] font-medium text-white">
        <Fit w={t.n.length === 1 ? 17 : 32} className="text-center">{t.n}</Fit>
      </div>
      {t.child && <div className="w-[22px]" />}
      <div
        className={
          "flex min-w-0 flex-1 items-center " +
          (t.child ? "border-b-2 border-l-2 border-[#444] " : i === 0 ? "pb-[2px] " : "border-b-2 border-[#444] ") +
          (i === 1 ? "relative -top-[2px] -mb-[2px] h-[64px] rounded-tl-[20px] border-t-2 " : "")
        }
      >
        <div className={"flex shrink-0 items-center " + (t.child ? "w-[130px]" : "w-[154px]")}>
          {t.fold ? (
            <div className="ml-[15px] flex h-11 w-[121px] items-center rounded-[12px] bg-[#676767] shadow-[inset_0_1px_0_rgba(255,255,255,0.2),0_0_0_1px_rgba(0,0,0,0.2),0_2px_2px_rgba(0,0,0,0.3)]">
              <span className="ml-[5px] flex w-[24px] justify-center text-white">
                {t.fold === "open" ? <Ico w={20} h={14} sw={2.200}><path d="M2 2L10 11L18 2" /></Ico> : <Ico w={14} h={20} sw={2.200}><path d="M2 2L11 10L2 18" /></Ico>}
              </span>
              <span className={t.inst === "stack" ? "ml-[27px]" : "ml-[25px]"}><Icon /></span>
            </div>
          ) : (
            <span className={t.child ? "ml-[45px]" : "ml-[69px]"}><Icon /></span>
          )}
        </div>
        <div className={"flex h-8 shrink-0 overflow-hidden rounded-[8px] bg-[#676767] text-[24px] font-semibold text-white " + shadow}>
          <span className={"flex w-[41px] items-center justify-center border-r-2 border-[#4d4d4d] " + (t.mute ? "bg-[#267a9b]" : "")}><Fit w={20}>M</Fit></span>
          <span className="flex w-[41px] items-center justify-center"><Fit w={16}>S</Fit></span>
        </div>
        <div className="ml-3 flex w-[82px] shrink-0 justify-between text-[24px] font-medium text-white">
          {t.fz === "on" && <span className={"flex h-8 w-[41px] items-center justify-center rounded-[8px] bg-[#2d8a41] " + shadow}><Snowflake size={24} strokeWidth={1.700} /></span>}
          {t.fz === "off" && (
            <span className={"flex h-8 w-[82px] rounded-[8px] bg-[#676767] " + shadow}>
              <span className="flex w-[41px] items-center justify-center border-r-2 border-[#4d4d4d]"><Snowflake size={24} strokeWidth={1.700} /></span>
              <span className="flex flex-1 items-center justify-center">R</span>
            </span>
          )}
          {!t.fz && t.rec && <span className={"ml-auto flex h-8 w-[41px] items-center justify-center rounded-[8px] bg-[#676767] " + shadow}>R</span>}
        </div>
        <Fit w={t.w} className="ml-[18px] text-[26px] font-medium text-white">{t.name}</Fit>
        <span className="mr-[24px] ml-auto size-[18px] shrink-0 rounded-full bg-[#333]" />
      </div>
    </div>
  );
}

/* ---------- arrange area ---------- */

const x = (bar: number) => 18 + 11.690 * (bar - 1);

type Notes = "line" | "step" | "square" | "bands" | "bandsA" | "bandsB" | "drum";
type Region = {
  a: number; b: number; mute?: boolean; dot?: "big" | "small"; t?: string; w?: number; tone?: "green" | "gray"; notes?: Notes; loops?: number[]; square?: boolean;
};

const cla = (a: number): Region => ({ a, b: a + 4, t: "Cla", w: 34, notes: "line" });
const dot = (a: number, b: number, notes: Notes = "line"): Region => ({ a, b, mute: true, dot: "big", notes });
const bar = (a: number, b: number): Region => ({ a, b, notes: "line", square: true });
const classic = (a: number, loops?: number[]): Region => ({ a, b: a + 8, t: "Classic", w: 75, notes: "line", loops });
const sum = (a: number, b: number, notes: Notes = "bands"): Region => ({ a, b, t: b - a > 4 ? "Sum 12" : "Su", w: b - a > 4 ? 77 : 28, notes });
const violi = (a: number): Region => ({ a, b: a + 7, t: "3 Violi", w: 66, notes: "square" });
const motow = (a: number): Region => ({ a, b: a + 8, t: "Motow", w: 71, notes: "drum", loops: [a + 2, a + 4, a + 6], square: true });

const REGIONS: Region[][] = [
  [],
  [dot(1, 5), cla(5), cla(25), cla(29), cla(33), cla(37), bar(41, 43), bar(43, 44), bar(44, 45), bar(45, 47), bar(47, 48), bar(48, 49), cla(49), cla(53), cla(57), dot(65, 69)],
  [{ a: 1, b: 5, mute: true, t: "Cla", w: 34, tone: "green", notes: "line" }],
  [classic(9), classic(17), cla(25), cla(29), classic(33, [37]), cla(49), cla(53), cla(57), dot(65, 69), cla(97)],
  [dot(38, 41, "step"), { a: 50, b: 53, mute: true, t: "Cl", w: 23, tone: "green", notes: "step" }],
  [classic(41, [45])],
  [{ a: 33, b: 37, mute: true, t: "Cla", w: 34, tone: "green", notes: "line" }],
  [sum(9, 17, "bandsA"), sum(17, 25, "bandsB"), sum(25, 33), dot(33, 37, "bands"), sum(37, 41), sum(49, 57), sum(57, 61), dot(65, 69, "bands")],
  [
    { a: 33, b: 34, mute: true, dot: "small", notes: "square", square: true },
    { a: 34, b: 35, mute: true, dot: "small", notes: "square", square: true },
    { a: 35, b: 37, notes: "square", square: true },
  ],
  [
    { a: 33, b: 35, mute: true, dot: "small", notes: "line", square: true },
    { a: 35, b: 37, mute: true, dot: "small", notes: "line", square: true },
    { a: 37, b: 39, mute: true, dot: "small", notes: "line", square: true },
    { a: 39, b: 39.500, notes: "line", square: true },
    { a: 39.500, b: 40, notes: "line", square: true },
    { a: 40, b: 41, notes: "line", square: true },
  ],
  [],
  [cla(25), cla(29), cla(49), cla(53), cla(57), dot(65, 69)],
  [
    { a: 13, b: 14.750, notes: "square", square: true },
    { a: 15, b: 17, notes: "square", square: true },
    { a: 17, b: 18.850, notes: "square", square: true },
    { a: 21, b: 22.750, notes: "square", square: true },
  ],
  [
    { a: 1, b: 9, mute: true, dot: "big", t: "Flut", w: 39, tone: "gray", notes: "step" },
    { a: 24.300, b: 28.950, t: "Flut", w: 39, notes: "step" },
    { a: 48.250, b: 53, t: "Flut", w: 39, notes: "step" },
  ],
  [{ a: 29, b: 33, t: "Flu", w: 32, notes: "step" }, { a: 53, b: 57, t: "Flu", w: 32, notes: "step" }, dot(65, 69, "step")],
  [violi(8), violi(28), violi(52), { a: 64, b: 71, mute: true, dot: "big", t: "3 V", w: 35, tone: "gray", notes: "square" }],
  [motow(9), { a: 17, b: 24, t: "Moto", w: 54, notes: "drum", loops: [19, 21, 23], square: true }, motow(25), motow(49), { a: 97, b: 99, notes: "drum", square: true }],
  [{ a: 33, b: 41, mute: true, dot: "big", t: "Mot", w: 40, tone: "gray", notes: "drum", loops: [35, 37, 39], square: true }, motow(41)],
];

function NoteMarks({ r }: { r: Region }) {
  const light = r.mute ? "bg-[#a3a3a3]" : "bg-[#b7f0c1]";
  const dark = r.mute ? "bg-[#828282]" : "bg-[#1d8229]";
  switch (r.notes) {
    case "line":
      return (
        <div className="absolute inset-x-0 top-[42px] flex h-1">
          <div className={"flex-1 " + light} />
          {r.loops && <div className="flex-1 bg-[#5fd074]" />}
        </div>
      );
    case "step":
      return (
        <div className="absolute inset-x-[2px] top-[42px] flex">
          <div className={"h-1 flex-[5] " + light} />
          <div className={"mt-[2px] h-1 flex-[2] " + light} />
          <div className={"h-1 flex-[2] " + light} />
          {r.b - r.a === 8 && <div className="flex-[0.3]" />}
        </div>
      );
    case "square":
      return <div className={"absolute top-[42px] left-[3px] h-1 w-[6px] " + light} />;
    case "bands":
      return (
        <>
          <div className={"absolute inset-x-0 top-[36px] h-[7px] " + dark} />
          <div className={"absolute inset-x-0 top-[45px] h-[7px] " + dark} />
        </>
      );
    case "bandsA":
      return (
        <>
          <div className={"absolute inset-x-0 top-[36px] h-1 " + dark} />
          <div className="absolute inset-x-0 top-[48px] h-1 bg-[#67c478]" />
        </>
      );
    case "bandsB":
      return (
        <>
          <div className={"absolute inset-x-0 top-[36px] h-1 " + dark} />
          <div className={"absolute inset-x-0 top-[42px] h-1 " + dark} />
          <div className="absolute inset-x-0 top-[48px] h-1 bg-[#67c478]" />
        </>
      );
    case "drum":
      return (
        <div className="absolute inset-x-0 top-[42px] flex h-[6px]">
          {Array.from({ length: Math.ceil((r.b - r.a) / 2) }, (_, k) => (
            <div key={k} className="flex w-[23.4px] shrink-0 items-end pr-1">
              <div className={"h-[6px] w-[14px] " + (k === 0 ? light : r.mute ? "bg-[#6d6d6d]" : "bg-[#5fca72]")} />
              <div className={"mb-[2px] h-1 flex-1 " + (k === 0 ? light : r.mute ? "bg-[#6d6d6d]" : "bg-[#5fca72]")} />
            </div>
          ))}
        </div>
      );
    default:
      return null;
  }
}

function RegionBox({ r }: { r: Region }) {
  const left = x(r.a) - 1;
  const width = x(r.b) - x(r.a) + 2;
  return (
    <div
      style={{ left, width }}
      className={
        "absolute top-0 h-[60px] overflow-hidden border-2 border-black " +
        (r.mute ? "bg-[#484848] " : "bg-[#25a337] ") +
        (r.square ? "rounded-[4px]" : "rounded-[9px]")
      }
    >
      <NoteMarks r={r} />
      {r.dot === "small" && <span className="absolute top-[12px] left-1/2 size-2 -translate-x-1/2 rounded-full bg-[#6cff84]" />}
      <div className={"flex h-[36px] items-center " + (r.dot === "big" ? (r.b - r.a > 3 ? "pl-[10px]" : "pl-[8px]") : "pl-[10px]")}>
        {r.dot === "big" && <span className="mt-[1px] mr-[12px] size-[18px] shrink-0 rounded-full bg-[#6cff84]" />}
        {r.t && (
          <Fit w={r.w ?? 30} className={"mt-[1px] text-[23px] font-medium " + (r.tone === "green" ? "text-[#6cff84]" : r.tone === "gray" ? "text-[#aaa]" : "text-[#effcf1]")}>
            {r.t}
          </Fit>
        )}
      </div>
      {r.loops?.map((l) => (
        <React.Fragment key={l}>
          <span style={{ left: x(l) - x(r.a) - 4 }} className="absolute -top-[5px] size-[7px] rotate-45 bg-black" />
          <span style={{ left: x(l) - x(r.a) - 4 }} className="absolute -bottom-[5px] size-[7px] rotate-45 bg-black" />
        </React.Fragment>
      ))}
    </div>
  );
}

const GRID = Array.from({ length: 54 }, (_, k) => Math.round(x(1 + 2 * k)) - 1);

function Ruler() {
  return (
    <div className="relative flex h-[76px] w-[1280px] shrink-0 flex-col overflow-hidden bg-[#323232]">
      <div className="box-content flex h-[38px] border-b-2 border-[#1f1f1f] pl-5">
        <div className="flex h-full w-full bg-[repeating-linear-gradient(135deg,#323232_0px,#323232_7.5px,#3a3a3a_7.5px,#3a3a3a_15px)] pt-[2px] pl-[44px]">
          <div className="h-full w-[656px] bg-[#bc9b39]" />
        </div>
      </div>
      <div className="absolute inset-x-0 top-[42px] bottom-0">
        {GRID.map((g) => <span key={g} style={{ left: g }} className="absolute inset-y-0 w-[2px] bg-[#6c6c6c]" />)}
      </div>
      <div className="absolute inset-y-0 left-[19px] border-l-2 border-dotted border-[#6a6a6a]" />
      <svg width={20} height={28} viewBox="0 0 20 28" className="absolute top-1 left-0"><path d="M0 0L15 11Q17 13 15 15L0 27Z" fill="#5a5a5a" /></svg>
      {[1, 17, 33, 49, 65, 81, 97].map((n) => {
        const gold = n > 1 && n < 60;
        return (
          <div key={n} style={{ left: Math.round(x(n)) - 1 }} className={"absolute top-[6px] flex h-[34px] " + (n === 1 ? "pl-[4px]" : gold ? "border-l-2 border-black" : "border-l-2 border-[#6c6c6c]")}>
            <Fit w={n === 1 ? 12 : 31} className={"ml-[4px] text-[26px] leading-[22px] font-medium " + (gold ? "text-black" : "text-[#cfcfcf]")}>{String(n)}</Fit>
          </div>
        );
      })}
      <svg width={36} height={38} viewBox="0 0 36 38" className="absolute top-[40px] left-[299px]">
        <path d="M5 0H31Q35 0 35 5V14Q35 18 31 22L18 37L5 22Q1 18 1 14V5Q1 0 5 0Z" fill="#a9a9a9" />
        <rect x={17} y={6} width={2} height={32} fill="#fff" />
      </svg>
    </div>
  );
}

function Arrange() {
  return (
    <div className="relative w-[1280px] shrink-0 overflow-hidden bg-[#2e2e2e]">
      <div className="absolute inset-x-0 top-0 h-[186px] bg-[#2b352d]" />
      {GRID.map((g) => <span key={g} style={{ left: g }} className="absolute inset-y-0 w-[2px] bg-white/8" />)}
      <div className="relative">
        {REGIONS.map((list, i) => (
          <div key={i} className="relative h-[62px] border-b-2 border-black/20">
            {i === 0 && <Fit w={70} className="absolute top-[12px] left-[18px] text-[24px] font-bold text-[#a2ffb6]">Sum 3</Fit>}
            {list.map((r, k) => <RegionBox key={k} r={r} />)}
          </div>
        ))}
      </div>
      <div className="absolute inset-y-0 left-0 w-3 bg-gradient-to-r from-black/35 to-transparent" />
      <div className="absolute inset-x-0 top-0 h-1 bg-gradient-to-b from-black/30 to-transparent" />
      <div className="absolute top-0 bottom-1 left-[315px] w-[4px] bg-black/40" />
      <div className="absolute top-0 bottom-1 left-[316px] w-[2px] bg-white" />
    </div>
  );
}

function TracksArea() {
  return (
    <div className="flex min-w-0 flex-1 flex-col bg-[#464646]">
      <Toolbar />
      <div className="-mt-[2px] flex h-[76px] shrink-0">
        <div className="flex w-[694px] shrink-0 gap-5 border-t-2 border-[#3e3e3e] px-5 pt-[16px] text-[26px] font-semibold text-white *:h-10">
          <div className="flex w-[66px]"><div className={cell + " w-full " + raised}><Ico w={24} h={24} sw={2.600}><path d="M12 2V22M2 12H22" /></Ico></div></div>
          <div className={cell + " w-[66px] " + raised}>
            <Ico w={34} h={28} sw={2.200}>
              <rect x={9} y={8} width={23} height={18} rx={3.500} />
              <path d="M5 20Q1.500 20 1.500 17V5Q1.500 1.500 5 1.500H21Q24.500 1.500 24.500 5" />
              <path d="M20.500 12V22M15.500 17H25.500" />
            </Ico>
          </div>
          <div className={cell + " w-[66px] " + raised}>S</div>
          <div className={cell + " ml-auto w-[66px] " + raised}><BoxArrowSmall /></div>
        </div>
        <Ruler />
      </div>
      <div className="flex min-h-0 flex-1 overflow-hidden">
        <div className="flex w-[694px] shrink-0 flex-col bg-[#575757]">
          {TRACKS.map((t, i) => <TrackHeader key={t.n} t={t} i={i} />)}
        </div>
        <Arrange />
      </div>
    </div>
  );
}

export default function App() {
  return (
    <div className="h-[2784px] w-[1654px] overflow-hidden bg-white font-['Inter',sans-serif]">
      <div className="h-[1654px] w-[2784px] origin-top-left translate-y-[2784px] -rotate-90 pt-[76px] pl-[112px]">
        <div className="relative h-[1430px] w-[2560px] rounded-[20px] shadow-[0_0_0_1px_#000,0_0_6px_rgba(0,0,0,0.35),0_36px_70px_rgba(0,0,0,0.6)]">
          <div className="flex h-full w-full flex-col overflow-hidden rounded-[20px]">
            <TitleBar />
            <div className="flex min-h-0 flex-1">
              <Inspector />
              <div className="w-1 shrink-0 bg-black" />
              <TracksArea />
            </div>
          </div>
          <div className="pointer-events-none absolute inset-0 rounded-[20px] shadow-[inset_0_0_0_2px_rgba(255,255,255,0.18)]" />
        </div>
      </div>
    </div>
  );
}
